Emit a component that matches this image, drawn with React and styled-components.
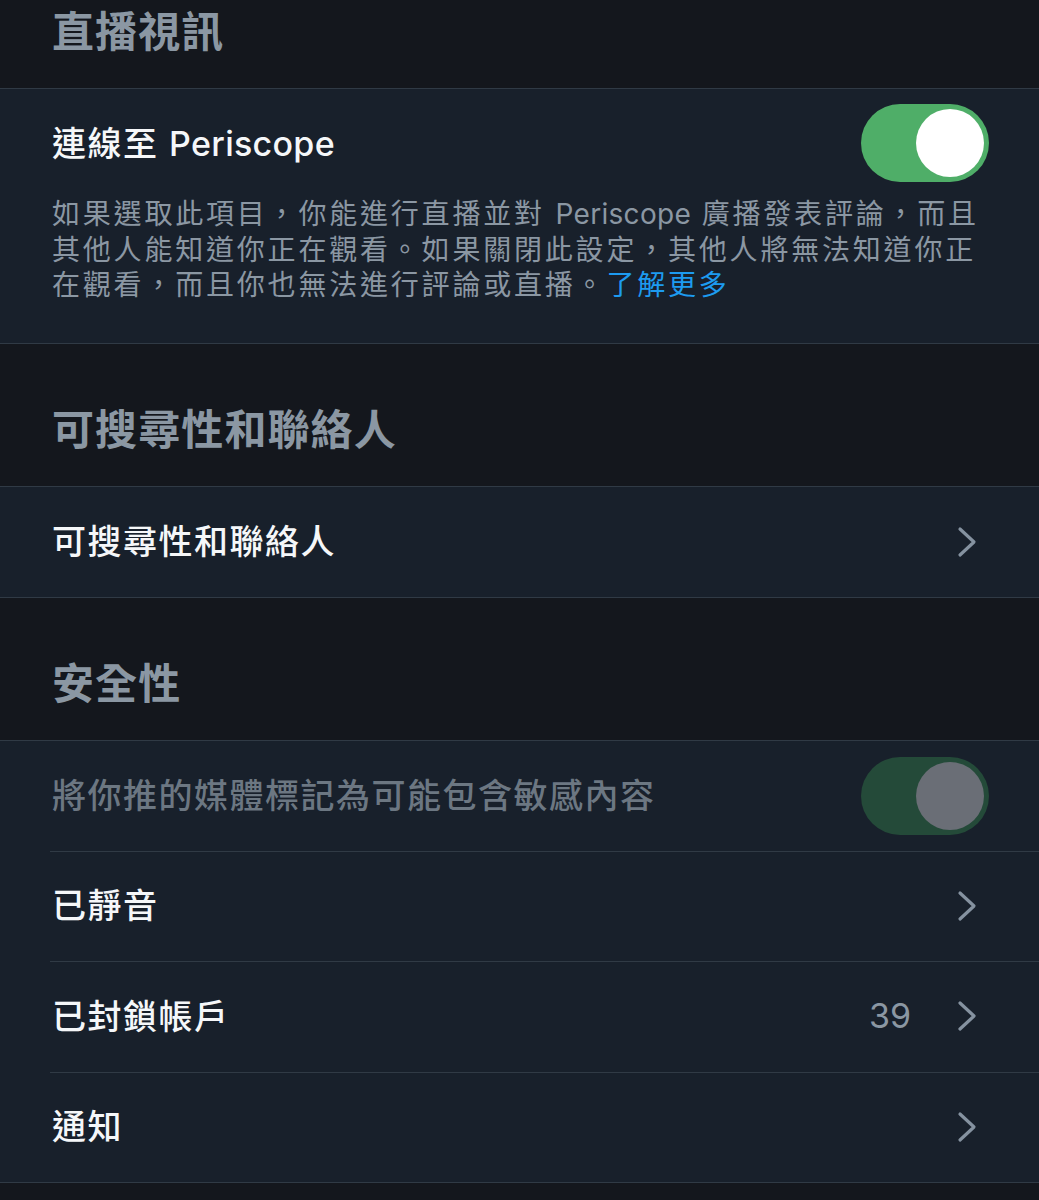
import React from "react";
import styled, { createGlobalStyle } from "styled-components";

const Global = createGlobalStyle`
  html, body { margin: 0; padding: 0; background: #14171d; }
  body { font-family: "Inter", "Noto Sans CJK TC", "Noto Sans", sans-serif; -webkit-font-smoothing: antialiased; }
  * { box-sizing: border-box; }
`;

const Page = styled.div`
  width: 1039px;
  min-height: 1200px;
  background: #14171d;
  display: flex;
  flex-direction: column;
`;

const SectionHeader = styled.div`
  height: ${(p) => p.$h}px;
  flex-shrink: 0;
  display: flex;
  align-items: flex-end;
  padding: 0 0 31px 52px;
  font-size: 42px;
  line-height: 50px;
  font-weight: 700;
  letter-spacing: 1.1px;
  color: #8b97a3;
`;

const Group = styled.div`
  background: #18202b;
  border-top: 1px solid #303a45;
  border-bottom: 1px solid #303a45;
  display: flex;
  flex-direction: column;
  flex-shrink: 0;
`;

const Row = styled.div`
  height: ${(p) => (p.$first ? 110 : 110.6)}px;
  display: flex;
  align-items: center;
  padding: 0 50px 0 52px;
  position: relative;
  ${(p) =>
    p.$divider
      ? `&::before { content: ""; position: absolute; left: 50px; right: 0; top: 0; height: 1px; background: #303a45; }`
      : ""}
`;

const Title = styled.div`
  flex: 1;
  font-size: 34px;
  font-weight: 500;
  letter-spacing: 1.5px;
  padding-bottom: 4px;
  color: ${(p) => (p.$dim ? "#6c7782" : "#f5f7f9")};
  white-space: nowrap;
`;

const Latin = styled.span`
  letter-spacing: 0.3px;
`;

const ToggleBlock = styled.div`
  padding: 15px 50px 39px 52px;
  display: flex;
  flex-direction: column;
  gap: 15px;
`;

const ToggleHead = styled.div`
  height: 78px;
  display: flex;
  align-items: center;
`;

const Description = styled.p`
  margin: 0;
  font-size: 28px;
  line-height: 35.5px;
  letter-spacing: 2.8px;
  color: #8b97a3;
  white-space: nowrap;
`;

const Link = styled.span`
  color: #1d9bf0;
`;

const Track = styled.div`
  width: 128px;
  height: 78px;
  border-radius: 39px;
  background: ${(p) => (p.$dim ? "#244a39" : "#4fae68")};
  display: flex;
  align-items: center;
  justify-content: flex-end;
  padding-right: 5px;
  flex-shrink: 0;
`;

const Knob = styled.div`
  width: 68px;
  height: 68px;
  border-radius: 50%;
  background: ${(p) => (p.$dim ? "#6a6e76" : "#ffffff")};
`;

const Value = styled.span`
  font-size: 34px;
  color: #8b97a3;
  margin-right: 46px;
  padding-bottom: 2px;
`;

const ChevronWrap = styled.span`
  display: flex;
  margin-right: 12px;
`;

const Chevron = () => (
  <ChevronWrap>
    <svg width="20" height="32" viewBox="0 0 20 32" fill="none">
      <polyline
        points="3,3 17,16 3,29"
        stroke="#8592a0"
        strokeWidth="3.2"
        strokeLinecap="round"
        strokeLinejoin="round"
      />
    </svg>
  </ChevronWrap>
);

const Toggle = ({ dim }) => (
  <Track $dim={dim}>
    <Knob $dim={dim} />
  </Track>
);

export default function App() {
  return (
    <Page>
      <Global />
      <SectionHeader $h={88}>直播視訊</SectionHeader>
      <Group>
        <ToggleBlock>
          <ToggleHead>
            <Title>
              連線至 <Latin>Periscope</Latin>
            </Title>
            <Toggle />
          </ToggleHead>
          <Description>
            如果選取此項目，你能進行直播並對 <Latin>Periscope</Latin> 廣播發表評論，而且
            <br />
            其他人能知道你正在觀看。如果關閉此設定，其他人將無法知道你正
            <br />
            在觀看，而且你也無法進行評論或直播。<Link>了解更多</Link>
          </Description>
        </ToggleBlock>
      </Group>

      <SectionHeader $h={142}>可搜尋性和聯絡人</SectionHeader>
      <Group>
        <Row $first>
          <Title>可搜尋性和聯絡人</Title>
          <Chevron />
        </Row>
      </Group>

      <SectionHeader $h={142}>安全性</SectionHeader>
      <Group>
        <Row $first>
          <Title $dim>將你推的媒體標記為可能包含敏感內容</Title>
          <Toggle dim />
        </Row>
        <Row $divider>
          <Title>已靜音</Title>
          <Chevron />
        </Row>
        <Row $divider>
          <Title>已封鎖帳戶</Title>
          <Value>39</Value>
          <Chevron />
        </Row>
        <Row $divider>
          <Title>通知</Title>
          <Chevron />
        </Row>
      </Group>
    </Page>
  );
}
